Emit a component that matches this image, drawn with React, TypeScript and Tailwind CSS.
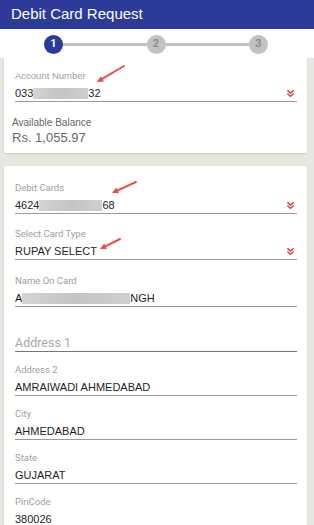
import React from "react";

const Chevrons = () => (
  <svg width="9" height="9" viewBox="0 0 10 10" fill="none" stroke="#e53945" strokeWidth="1.6">
    <polyline points="1.5,1.5 5,4.5 8.5,1.5" />
    <polyline points="1.5,5 5,8 8.5,5" />
  </svg>
);

const Blur = ({ w }: { w: number }) => (
  <span
    className="inline-block h-[11px] align-middle bg-gradient-to-r from-[#d4d4d4] via-[#c4c4c4] to-[#cfcfcf]"
    style={{ width: w }}
  />
);

const Field = ({
  label,
  children,
  select,
  labelFont,
  mb,
}: {
  label: string;
  children: React.ReactNode;
  select?: boolean;
  labelFont?: string;
  mb?: string;
}) => (
  <div className={mb ?? "mb-[13px]"}>
    <div className={`h-[12px] leading-[12px] text-[9.5px] text-[#9e9e9e] ${labelFont ?? "font-['Roboto']"}`}>{label}</div>
    <div className="mt-[3px] flex h-[16px] items-center justify-between border-b border-[#9a9a9a] font-['Liberation_Sans'] text-[11px] text-[#1e1e1e] box-content">
      <span className="flex items-center">{children}</span>
      {select && (
        <span className="mr-[2px] flex items-center">
          <Chevrons />
        </span>
      )}
    </div>
  </div>
);

const Arrow = ({ x1, y1, x2, y2 }: { x1: number; y1: number; x2: number; y2: number }) => {
  const ang = Math.atan2(y2 - y1, x2 - x1);
  const len = 7;
  const a1 = ang + Math.PI - 0.45;
  const a2 = ang + Math.PI + 0.45;
  const p1 = `${x2 + len * Math.cos(a1)},${y2 + len * Math.sin(a1)}`;
  const p2 = `${x2 + len * Math.cos(a2)},${y2 + len * Math.sin(a2)}`;
  return (
    <g>
      <line x1={x1} y1={y1} x2={x2 + 2 * Math.cos(ang + Math.PI)} y2={y2 + 2 * Math.sin(ang + Math.PI)} stroke="#f04a4a" strokeWidth="2" strokeLinecap="round" />
      <polygon points={`${x2},${y2} ${p1} ${p2}`} fill="#f04a4a" />
    </g>
  );
};

export default function App() {
  return (
    <div className="relative h-[525px] w-[314px] overflow-hidden bg-[#e7e6e1] font-['Liberation_Sans']">
      <div className="flex h-[29px] items-center bg-[#2c3a98] pl-[11px] text-[15px] text-white">
        Debit Card Request
      </div>
      <div className="relative z-10 h-[29px] bg-white">
        <div className="absolute left-[53px] right-[56px] top-[14px] h-[3px] bg-[#c2c2c2]" />
        <div className="relative flex items-center justify-between pl-[44px] pr-[46px] pt-[6px]">
          <div className="flex h-[19px] w-[19px] items-center justify-center rounded-full bg-[#2c3a98] font-['Roboto'] text-[11px] font-bold text-white">1</div>
          <div className="flex h-[19px] w-[19px] items-center justify-center rounded-full bg-[#c2c2c2] font-['Roboto'] text-[11px] font-bold text-[#8c8c8c]">2</div>
          <div className="flex h-[19px] w-[19px] items-center justify-center rounded-full bg-[#c2c2c2] font-['Roboto'] text-[11px] font-bold text-[#8c8c8c]">3</div>
        </div>
      </div>

      <div className="ml-[4px] mr-[7px]">
        <div className="rounded-b-[2px] bg-white pb-[7px] pl-[11px] pr-[10px] pt-[12px] shadow-[0_1px_2px_rgba(0,0,0,0.15)]">
          <Field label="Account Number" select labelFont="font-['Liberation_Sans'] text-[#a0a0a0]" mb="mb-[14px]">
            033<Blur w={55} />32
          </Field>
          <div className="-ml-[3px] h-[12px] pt-[1px] leading-[12px] text-[10px] text-[#666]">Available Balance</div>
          <div className="-ml-[3px] mt-[2px] h-[16px] leading-[16px] text-[13px] text-[#666]">Rs. 1,055.97</div>
        </div>

        <div className="mt-[13px] rounded-[2px] bg-white pl-[11px] pr-[10px] pt-[16px] shadow-[0_1px_2px_rgba(0,0,0,0.15)]">
          <Field label="Debit Cards" select mb="mb-[14px]">
            4624<Blur w={63} />68
          </Field>
          <Field label="Select Card Type" select mb="mb-[15px]">
            RUPAY SELECT
          </Field>
          <Field label="Name On Card" mb="mb-[16px]">
            A<Blur w={108} />NGH
          </Field>
          <div className="mb-[12px]">
            <div className="h-[12px]" />
            <div className="flex h-[16px] items-center border-b border-[#777] box-content font-['Roboto'] text-[12.5px] text-[#a8a8a8]">
              Address 1
            </div>
          </div>
          <Field label="Address 2" mb="mb-[12px]">AMRAIWADI AHMEDABAD</Field>
          <Field label="City" mb="mb-[12px]">AHMEDABAD</Field>
          <Field label="State" mb="mb-[12px]">GUJARAT</Field>
          <Field label="PinCode">380026</Field>
        </div>
      </div>

      <svg className="pointer-events-none absolute left-0 top-0" width="314" height="525">
        <Arrow x1={124} y1={66} x2={97} y2={82} />
        <Arrow x1={136} y1={182} x2={112} y2={193} />
        <Arrow x1={120} y1={239} x2={100} y2={249} />
      </svg>
    </div>
  );
}
